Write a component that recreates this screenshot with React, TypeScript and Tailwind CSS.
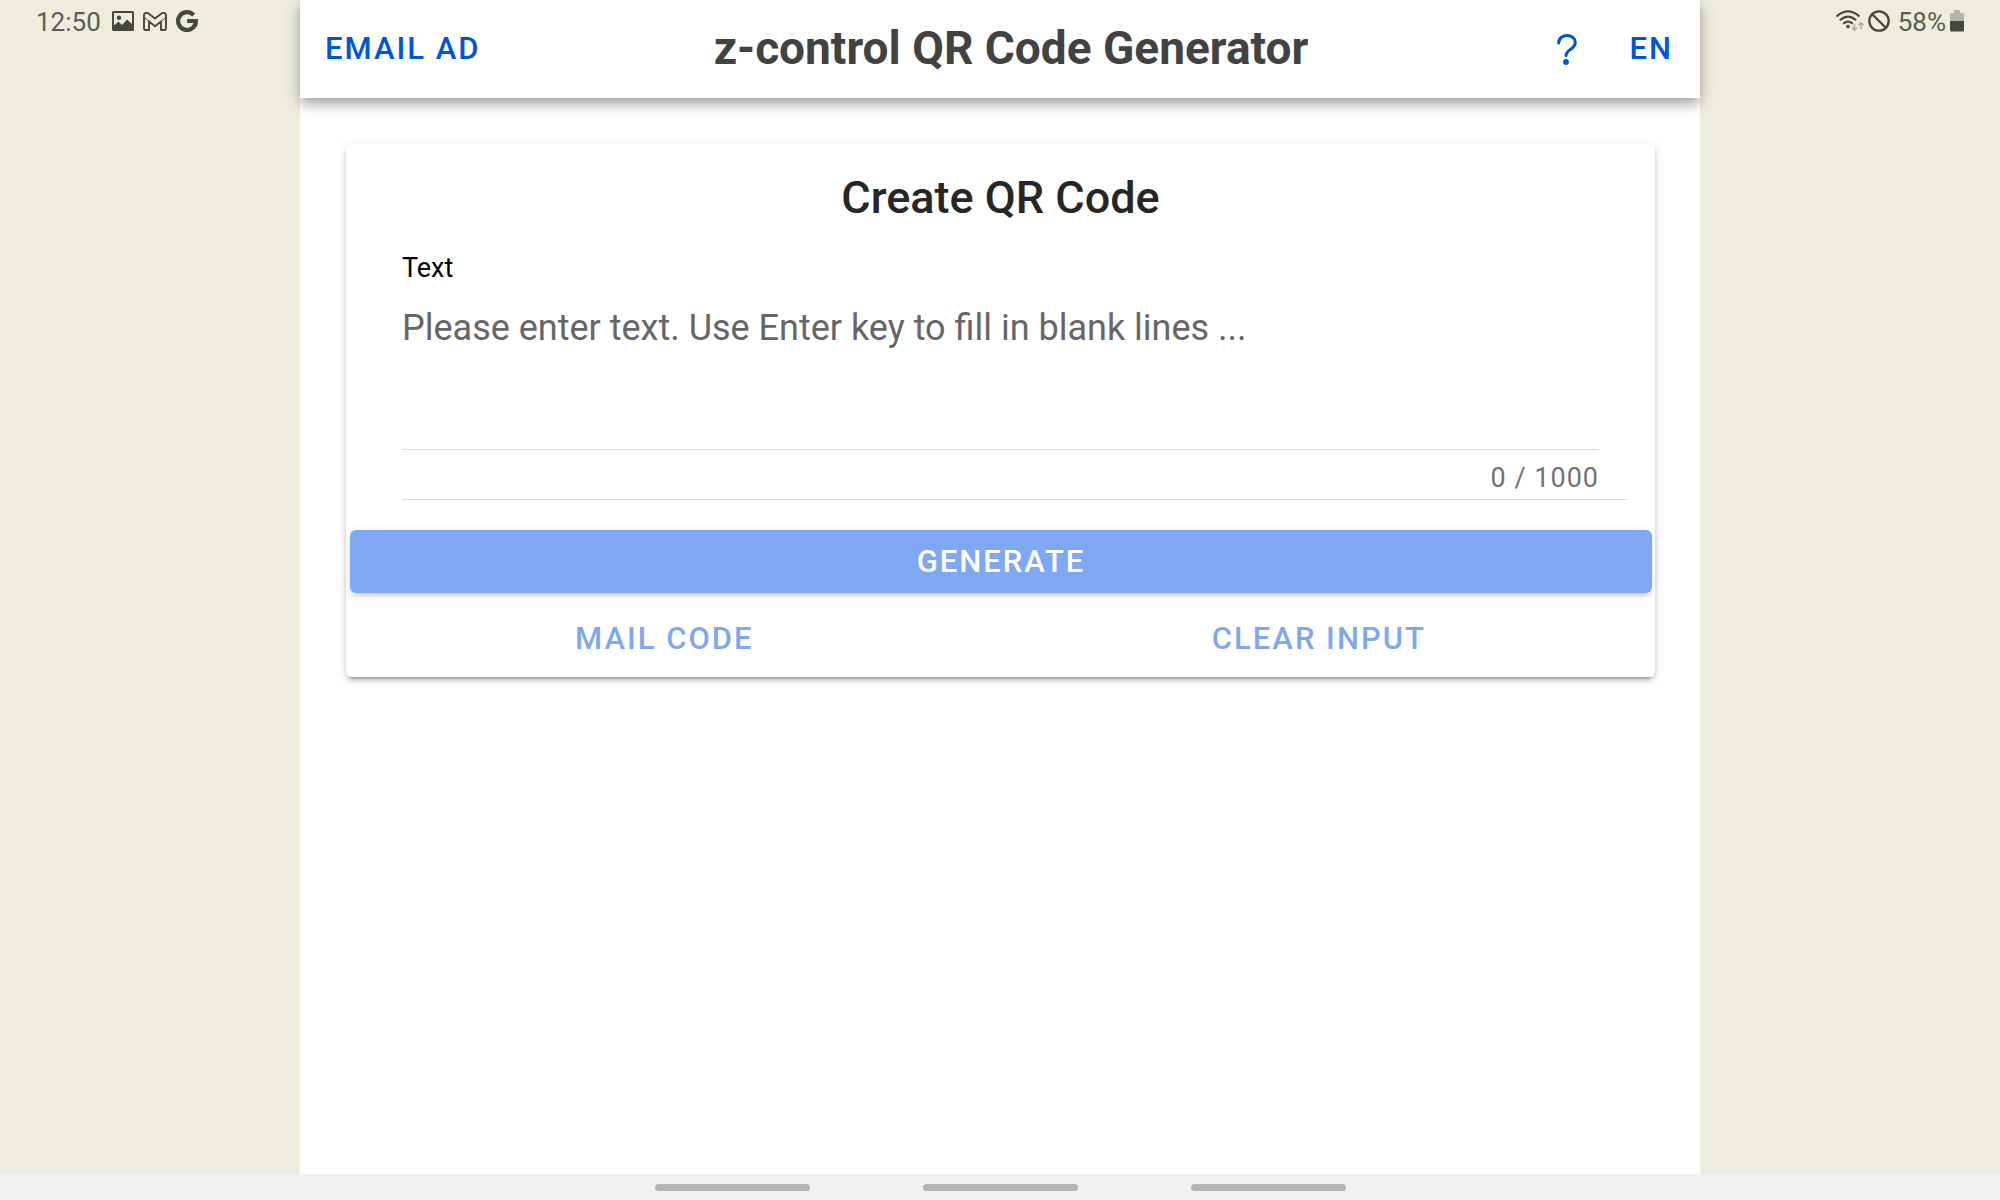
import { useState } from "react";
import type { ButtonHTMLAttributes } from "react";

const MAX_LENGTH = 1000;

function TextButton({ className = "", ...props }: ButtonHTMLAttributes<HTMLButtonElement>) {
  return (
    <button
      type="button"
      className={`h-[63px] rounded-md pt-px text-[31px] font-medium tracking-[2px] text-[#0054dc] uppercase disabled:opacity-50 ${className}`}
      {...props}
    />
  );
}

function PictureIcon() {
  return (
    <svg viewBox="0 0 22 20" className="h-5 w-[22px]" aria-hidden="true">
      <path
        fill="currentColor"
        fillRule="evenodd"
        d="M1.6 0h18.8Q22 0 22 1.6v16.8Q22 20 20.4 20H1.600Q0 20 0 18.400V1.600Q0 0 1.600 0ZM2 2v12.500l4.500-4 3.500 3.500 5-5.500 5 4.500V2ZM7 4.500a2.200 2.200 0 1 1 0 4.400 2.200 2.200 0 0 1 0-4.400Z"
      />
    </svg>
  );
}

function MailIcon() {
  return (
    <svg viewBox="0 0 24 19" className="h-[19px] w-6" fill="none" stroke="currentColor" strokeWidth="1.900" strokeLinejoin="round" aria-hidden="true">
      <path d="M1 3.500v12.700Q1 18 2.600 18H6V9.500l6 4.700 6-4.700V18h3.400q1.600 0 1.600-1.800V3.500C23 .8 20.300.2 18.500 1.600L12 6.600 5.500 1.600C3.700.2 1 .8 1 3.500Z" />
      <path d="M1.500 5.600 6 9.500M22.500 5.600 18 9.500" strokeWidth="1" />
    </svg>
  );
}

function GoogleIcon() {
  return (
    <svg viewBox="0 0 22 22" className="size-[22px]" fill="none" stroke="currentColor" strokeWidth="4.200" aria-hidden="true">
      <path d="M17.600 5.100A8.900 8.900 0 1 0 19.900 11H11.200" />
    </svg>
  );
}

function WifiIcon() {
  return (
    <svg viewBox="0 0 28 22" className="h-[22px] w-7" fill="none" stroke="currentColor" strokeLinecap="round" aria-hidden="true">
      <path d="M1.200 5.800Q12 -3.200 22.800 5.800M4.600 9.600Q12 3.600 19.400 9.600M8 13.200Q12 10 16 13.200" strokeWidth="2.200" />
      <circle cx="12" cy="16.500" r="1.800" fill="currentColor" stroke="none" />
      <path d="M18.500 14.500V20M16.500 18.200l2 2.200 2-2.200M25 18.500V13M23 14.800l2-2.200 2 2.200" className="text-[#adad9f]" strokeWidth="1.600" />
    </svg>
  );
}

function BlockedIcon() {
  return (
    <svg viewBox="0 0 22 22" className="size-[22px]" fill="none" stroke="currentColor" strokeWidth="2.300" aria-hidden="true">
      <circle cx="11" cy="11" r="9.700" />
      <path d="m4.200 4.200 13.600 13.600" />
    </svg>
  );
}

function BatteryIcon() {
  return (
    <svg viewBox="0 0 14 22" className="h-[22px] w-3.5 shrink-0" aria-hidden="true">
      <path fill="#b5b5a7" d="M4 0h6v3h3q1 0 1 1v7H0V4q0-1 1-1h3Z" />
      <path fill="currentColor" d="M0 11h14v9.500q0 1-1 1H1q-1 0-1-1Z" />
    </svg>
  );
}

function HelpIcon() {
  return (
    <svg viewBox="0 0 20 31" className="h-[31px] w-5" fill="none" stroke="currentColor" strokeWidth="3" strokeLinecap="round" aria-hidden="true">
      <path d="M1.700 9C1.700 4.300 5.500 1.500 10 1.500S18.300 4.300 18.300 8.600C18.300 15.200 9 15.800 9 21.600" />
      <circle cx="9" cy="28" r="2.900" fill="currentColor" stroke="none" />
    </svg>
  );
}

export default function App() {
  const [text, setText] = useState("");
  const empty = text.length === 0;

  return (
    <div className="flex min-h-screen flex-col bg-[#eeecdd] font-[Roboto,sans-serif]">
      <div className="grid flex-1 grid-cols-[15fr_70fr_15fr]">
        <div className="flex h-[42px] items-center pl-9 text-[#46473f]">
          <span className="pt-0.5 text-[26px] text-[#5b5c53]">12:50</span>
          <div className="flex items-center gap-[9px] pl-[11px]">
            <PictureIcon />
            <MailIcon />
            <GoogleIcon />
          </div>
        </div>

        <div className="bg-white">
          <header className="relative flex h-[98px] items-center bg-white pr-5 pl-[5px] shadow-[0_5px_9px_-2px_rgba(0,0,0,0.2),0_9px_11px_0_rgba(0,0,0,0.14),0_2px_22px_0_rgba(0,0,0,0.12)]">
            <TextButton className="px-5">Email ad</TextButton>
            <h1 className="flex-1 pb-px text-center text-[46px] font-bold text-[#424242]">z-control QR Code Generator</h1>
            <TextButton className="pr-8 pl-9" aria-label="Help">
              <HelpIcon />
            </TextButton>
            <TextButton className="pr-[7px] pl-5">EN</TextButton>
          </header>

          <main className="mt-[46px] mr-[45px] ml-[46px] rounded-md bg-white pt-[27px] pb-[7px] shadow-[0_7px_2px_-5px_rgba(0,0,0,0.2),0_4px_4px_0_rgba(0,0,0,0.14),0_2px_11px_0_rgba(0,0,0,0.12)]">
            <h2 className="text-center text-[45px] leading-[54px] font-medium text-[#262626]">Create QR Code</h2>

            <div className="mt-[27px] mr-7 ml-14 border-b border-[#dbdbdb] pr-7">
              <label htmlFor="qr-text" className="block text-[27px] leading-8 text-black">
                Text
              </label>
              <textarea
                id="qr-text"
                value={text}
                maxLength={MAX_LENGTH}
                onChange={(event) => setText(event.target.value)}
                placeholder="Please enter text. Use Enter key to fill in blank lines ..."
                className="block h-[166px] w-full resize-none border-b border-[#dbdbdb] pt-[23px] text-[36px] leading-[42px] outline-none placeholder:text-[#666666]"
              />
              <p className="pt-3 pb-[5px] text-right text-[27px] leading-8 tracking-[1px] text-[#737373]">
                {text.length} / {MAX_LENGTH}
              </p>
            </div>

            <div className="mt-[30px] pr-[3px] pl-1">
              <button
                type="button"
                disabled={empty}
                className="h-[63px] w-full rounded-md bg-[#0054e9] pt-px text-[31px] font-medium tracking-[2px] text-white uppercase shadow-[0_7px_2px_-5px_rgba(0,0,0,0.2),0_4px_4px_0_rgba(0,0,0,0.14),0_2px_11px_0_rgba(0,0,0,0.12)] disabled:opacity-50"
              >
                Generate
              </button>
            </div>
            <div className="mt-3.5 flex justify-around">
              <TextButton className="px-5" disabled={empty}>Mail code</TextButton>
              <TextButton className="px-5" disabled={empty}>Clear input</TextButton>
            </div>
          </main>
        </div>

        <div className="flex h-[42px] items-center justify-end pr-9 text-[#46473f]">
          <WifiIcon />
          <div className="pl-1">
            <BlockedIcon />
          </div>
          <span className="pt-0.5 pr-1 pl-2 text-[26px] text-[#5b5c53]">58%</span>
          <BatteryIcon />
        </div>
      </div>

      <footer className="flex h-[26px] items-center justify-center gap-x-[113px] bg-[#f1f1f1]">
        <span className="h-[7px] w-[155px] rounded-full bg-[#b4b4b4]" />
        <span className="h-[7px] w-[155px] rounded-full bg-[#b4b4b4]" />
        <span className="h-[7px] w-[155px] rounded-full bg-[#b4b4b4]" />
      </footer>
    </div>
  );
}
